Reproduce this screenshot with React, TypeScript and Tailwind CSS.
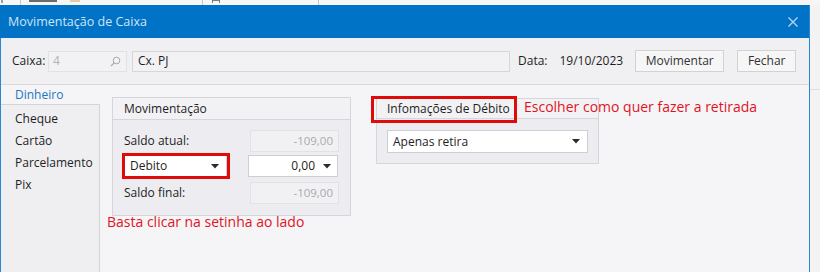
import React from "react";

const font = { fontFamily: '"Open Sans", "Noto Sans", sans-serif' };

function Arrow() {
  return (
    <svg width="8" height="5" viewBox="0 0 8 5" className="shrink-0">
      <path d="M0 0 L8 0 L4 4.5 Z" fill="#2b2b2b" />
    </svg>
  );
}

function DisabledBox({ value, w }: { value: string; w: string }) {
  return (
    <div
      className={`${w} h-[22px] border border-[#e2e2e6] bg-[#f1f1f4] flex items-center justify-end pr-[5px] text-[11.5px] text-[#a9a9ad]`}
    >
      {value}
    </div>
  );
}

export default function App() {
  return (
    <div
      className="w-[820px] h-[272px] bg-[#f3f3f4] flex flex-col overflow-hidden relative text-[#1e1e1e]"
      style={font}
    >
      {/* top strip of the app behind */}
      <div className="h-[5px] shrink-0 flex items-start bg-[#f6f6f6]">
        <div className="w-[2px] h-[3px] ml-[1px] bg-[#9aa0a6]" />
        <div className="w-px h-[5px] ml-[17px] bg-[#c8c8c8]" />
        <div className="w-[28px] h-[2px] ml-[8px] bg-[#6c6c6c]" />
        <div className="w-[10px] h-[2px] ml-[13px] bg-[#e6c9a6]" />
        <div className="w-px h-[5px] ml-[122px] bg-[#c8c8c8]" />
        <div className="w-[8px] h-[3px] ml-[9px] border border-[#7a7a7a] border-b-0" />
        <div className="w-px h-[5px] ml-[98px] bg-[#c8c8c8]" />
      </div>

      <div className="flex flex-1 min-h-0">
        {/* window */}
        <div className="w-[810px] shrink-0 flex flex-col border-r border-[#2b86d3]">
          {/* title bar */}
          <div className="h-[33px] shrink-0 bg-[#0173c6] flex items-center justify-between pl-[8px] pr-[10px] pt-px">
            <span className="text-[12.5px] text-[#cfe4f6]">Movimentação de Caixa</span>
            <svg width="12" height="12" viewBox="0 0 12 12">
              <path d="M1.5 1.5 L10.5 10.5 M10.5 1.5 L1.5 10.5" stroke="#b7d5ef" strokeWidth="1.3" />
            </svg>
          </div>

          <div className="flex-1 flex flex-col border-l border-[#2b86d3] min-h-0">
            {/* toolbar */}
            <div className="h-[47px] shrink-0 bg-[#f0f0f2] border-b border-[#d9d9dc] flex items-center text-[12px]">
              <span className="ml-[11px] w-[36px]">Caixa:</span>
              <div className="w-[79px] h-[21px] border border-[#e2e2e6] bg-[#f2f2f4] flex items-center justify-between pl-[4px] pr-[5px]">
                <span className="text-[#b2b2b6]">4</span>
                <svg width="11" height="11" viewBox="0 0 11 11">
                  <circle cx="6.5" cy="4.5" r="3.3" fill="none" stroke="#a7a7ab" strokeWidth="1" />
                  <path d="M4.2 6.8 L1 10" stroke="#a7a7ab" strokeWidth="1.2" />
                </svg>
              </div>
              <div className="ml-[5px] w-[378px] h-[21px] border border-[#d6d6da] bg-[#f2f2f4] flex items-center pl-[5px]">
                Cx. PJ
              </div>
              <span className="ml-[8px]">Data:</span>
              <span className="ml-[12px]">19/10/2023</span>
              <div className="ml-[12px] w-[89px] h-[22px] border border-[#d2d2d6] bg-[#f6f6f7] flex items-center justify-center text-[#333]">
                Movimentar
              </div>
              <div className="ml-[13px] w-[59px] h-[22px] border border-[#d2d2d6] bg-[#f6f6f7] flex items-center justify-center text-[#333]">
                Fechar
              </div>
            </div>

            {/* body */}
            <div className="flex-1 flex min-h-0 bg-[#f5f5f8] text-[12px]">
              {/* tabs */}
              <div className="w-[99px] shrink-0 flex flex-col">
                <div className="h-[19px] shrink-0 flex items-center pl-[14px] pt-px text-[#1f74c1]">Dinheiro</div>
                <div className="flex-1 bg-[#efeff2] border-t border-r border-[#d4d4d8] pt-[3px] flex flex-col">
                  <div className="h-[22px] flex items-center pl-[14px]">Cheque</div>
                  <div className="h-[22px] flex items-center pl-[14px]">Cartão</div>
                  <div className="h-[22px] flex items-center pl-[14px]">Parcelamento</div>
                  <div className="h-[22px] flex items-center pl-[14px]">Pix</div>
                </div>
              </div>

              {/* content */}
              <div className="flex-1 flex items-start relative">
                {/* Movimentação group */}
                <div className="ml-[12px] mt-[12px] w-[239px] h-[119px] border border-[#d6d6da] bg-[#ededf1] flex flex-col">
                  <div className="h-[22px] shrink-0 border-b border-[#d6d6da] bg-[#f2f2f5] flex items-center pl-[11px]">
                    Movimentação
                  </div>
                  <div className="mt-[10px] h-[22px] flex items-center justify-between pl-[11px] pr-[11px]">
                    <span>Saldo atual:</span>
                    <DisabledBox value="-109,00" w="w-[89px]" />
                  </div>
                  <div className="mt-px h-[26px] flex items-center justify-between pl-[9px] pr-[12px]">
                    <div className="w-[108px] h-[26px] border-[3px] border-[#e10a0a] bg-white flex">
                      <div className="flex-1 border-r border-[#cfcfd3] flex items-center justify-between pl-[5px] pr-[7px]">
                        <span>Debito</span>
                        <Arrow />
                      </div>
                    </div>
                    <div className="w-[90px] h-[22px] border border-[#cfcfd3] bg-white flex items-center justify-end pr-[6px] gap-[8px]">
                      <span>0,00</span>
                      <Arrow />
                    </div>
                  </div>
                  <div className="mt-[3px] h-[22px] flex items-center justify-between pl-[11px] pr-[11px]">
                    <span>Saldo final:</span>
                    <DisabledBox value="-109,00" w="w-[89px]" />
                  </div>
                </div>

                {/* Infomações de Débito group */}
                <div className="ml-[25px] mt-[13px] w-[223px] h-[66px] border border-[#d6d6da] bg-[#ededf1] flex flex-col">
                  <div className="h-[20px] shrink-0 border-b border-[#d6d6da] bg-[#f2f2f5] flex items-center pl-[10px]">
                    Infomações de Débito
                  </div>
                  <div className="mt-[11px] ml-[10px] w-[201px] h-[23px] border border-[#cfcfd3] bg-white flex items-center justify-between pl-[5px] pr-[7px]">
                    <span>Apenas retira</span>
                    <Arrow />
                  </div>
                </div>

                {/* annotations */}
                <div className="absolute left-[271px] top-[11px] w-[146px] h-[27px] border-[3px] border-[#e10a0a]" />
                <span className="absolute left-[424px] top-[12px] text-[14px] leading-[20px] text-[#e0141e] whitespace-nowrap">
                  Escolher como quer fazer a retirada
                </span>
                <span className="absolute left-[7px] top-[127px] text-[14px] leading-[20px] text-[#e0141e] whitespace-nowrap">
                  Basta clicar na setinha ao lado
                </span>
              </div>
            </div>
          </div>
        </div>

        {/* right background */}
        <div className="flex-1 flex flex-col">
          <div className="h-[33px]" />
          <div className="h-[52px] border-b border-[#dedee2]" />
        </div>
      </div>
    </div>
  );
}
